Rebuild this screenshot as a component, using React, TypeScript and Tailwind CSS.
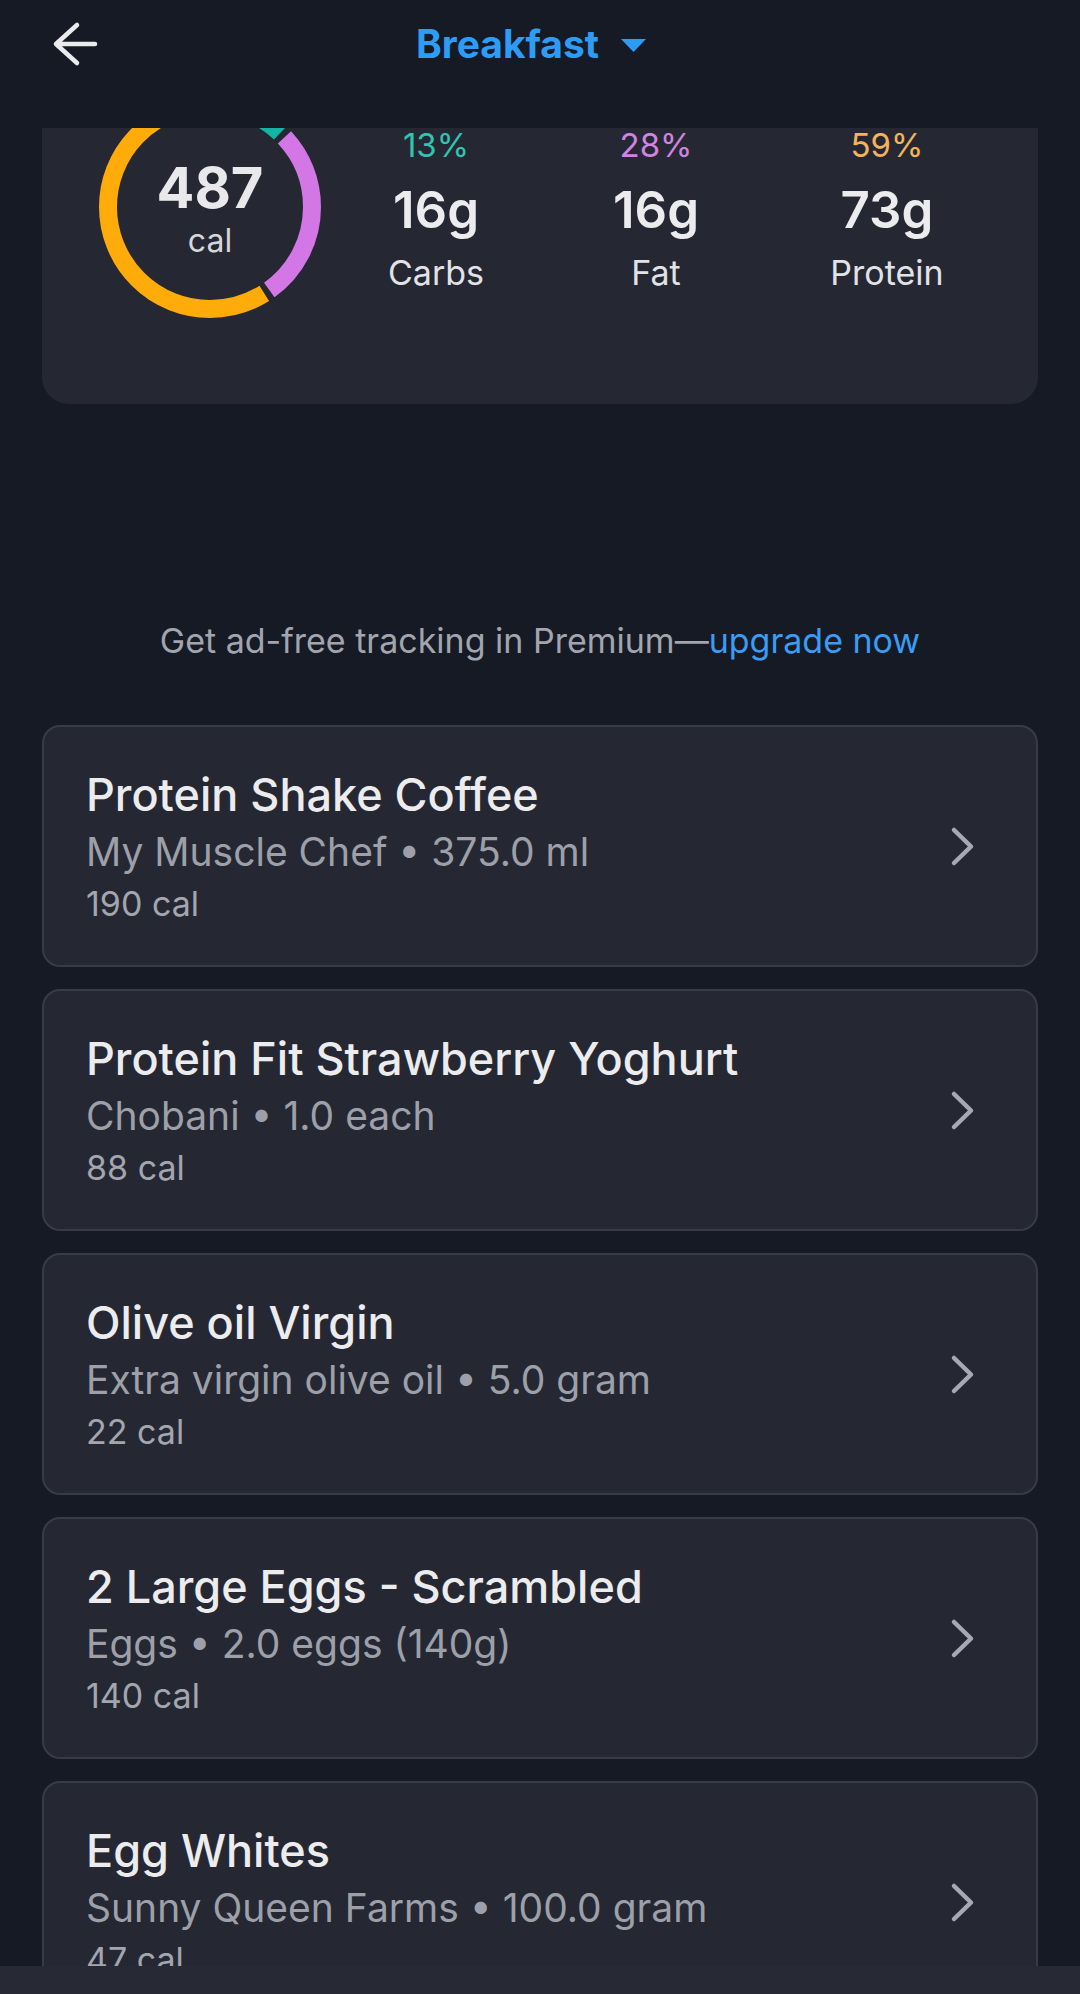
import React from "react";

const foods = [
  { name: "Protein Shake Coffee", detail: "My Muscle Chef • 375.0 ml", cal: "190 cal" },
  { name: "Protein Fit Strawberry Yoghurt", detail: "Chobani • 1.0 each", cal: "88 cal" },
  { name: "Olive oil Virgin", detail: "Extra virgin olive oil • 5.0 gram", cal: "22 cal" },
  { name: "2 Large Eggs - Scrambled", detail: "Eggs • 2.0 eggs (140g)", cal: "140 cal" },
  { name: "Egg Whites", detail: "Sunny Queen Farms • 100.0 gram", cal: "47 cal" },
];

const R = 102;
const C = 2 * Math.PI * R;
const GAP = 6;

const segments = [
  { color: "#14b3a4", start: 0, pct: 0.13 },
  { color: "#d477e6", start: 0.13, pct: 0.28 },
  { color: "#ffab0a", start: 0.41, pct: 0.59 },
];

function Ring() {
  return (
    <div className="relative h-[222px] w-[222px] shrink-0">
      <svg width="222" height="222" viewBox="0 0 222 222">
        <g transform="rotate(-90 111 111)">
          {segments.map((s) => (
            <circle
              key={s.color}
              cx="111"
              cy="111"
              r={R}
              fill="none"
              stroke={s.color}
              strokeWidth="18"
              strokeDasharray={`${s.pct * C - GAP} ${C}`}
              strokeDashoffset={-s.start * C}
            />
          ))}
        </g>
      </svg>
      <div className="absolute inset-0 flex flex-col items-center pt-[62px]">
        <span className="text-[56px] font-bold leading-[60px] text-[#e9e9ec]">487</span>
        <span className="mt-[4px] text-[32px] leading-[38px] text-[#d6d7db]">cal</span>
      </div>
    </div>
  );
}

function Macro({ pct, value, label, color, width }: { pct: string; value: string; label: string; color: string; width: string }) {
  return (
    <div className={`flex flex-col items-center ${width}`}>
      <span className={`text-[33px] leading-[34px] ${color}`}>{pct}</span>
      <span className="mt-[16px] text-[51px] font-semibold leading-[64px] text-[#ececef]">{value}</span>
      <span className="mt-[10px] text-[34px] leading-[42px] text-[#e2e3e6]">{label}</span>
    </div>
  );
}

function Chevron() {
  return (
    <svg width="25" height="41" viewBox="0 0 25 41" className="shrink-0">
      <polyline points="4,4 21,20.5 4,37" fill="none" stroke="#a6a9b1" strokeWidth="4.5" strokeLinecap="round" strokeLinejoin="round" />
    </svg>
  );
}

export default function App() {
  return (
    <div className="flex h-[1994px] w-[1080px] flex-col overflow-hidden bg-[#161a25] font-['Inter',sans-serif]">
      <header className="h-[128px] shrink-0">
        <div className="flex h-[88px] items-center pl-[50px]">
          <svg width="48" height="48" viewBox="0 0 48 48" className="shrink-0">
            <path d="M6 24 H45 M27 5 L6 24 L27 43" fill="none" stroke="#ebebed" strokeWidth="4.5" strokeLinecap="round" strokeLinejoin="round" />
          </svg>
          <div className="flex flex-1 items-center justify-center">
            <span className="text-[39px] font-bold leading-[48px] text-[#2d9cf5]">Breakfast</span>
            <svg width="25" height="13" viewBox="0 0 25 13" className="ml-[22px] mt-[2px]">
              <polygon points="0,0 25,0 12.5,13" fill="#2d9cf5" />
            </svg>
          </div>
          <div className="w-[116px] shrink-0" />
        </div>
      </header>

      <main className="flex flex-1 flex-col overflow-hidden">
        <div className="h-[276px] shrink-0 overflow-hidden px-[42px]">
          <div className="-mt-[40px] flex h-[316px] items-start rounded-[27px] bg-[#252833] pl-[57px] pt-[8px]">
            <Ring />
            <div className="ml-[3px] flex pt-[32px]">
              <Macro pct="13%" value="16g" label="Carbs" color="text-[#2fc4b4]" width="w-[224px]" />
              <Macro pct="28%" value="16g" label="Fat" color="text-[#d283e1]" width="w-[216px]" />
              <Macro pct="59%" value="73g" label="Protein" color="text-[#f5b35b]" width="w-[246px]" />
            </div>
          </div>
        </div>

        <p className="mt-[213px] text-center text-[34px] leading-[48px] text-[#a2a5ad]">
          Get ad-free tracking in Premium—<span className="text-[#3a9cf2]">upgrade now</span>
        </p>

        <div className="mt-[60px] flex flex-col gap-[22px] px-[42px]">
          {foods.map((f) => (
            <div
              key={f.name}
              className="flex h-[242px] shrink-0 items-center rounded-[18px] border-2 border-[#383b47] bg-[#252833] pl-[42px] pr-[61px]"
            >
              <div className="flex h-full flex-1 flex-col pt-[42px]">
                <span className="text-[45px] font-medium leading-[52px] text-[#ececef]">{f.name}</span>
                <span className="mt-[7px] text-[39px] leading-[48px] text-[#9da0a9]">{f.detail}</span>
                <span className="mt-[8px] text-[34px] leading-[40px] text-[#a3a6ae]">{f.cal}</span>
              </div>
              <Chevron />
            </div>
          ))}
        </div>
      </main>

      <div className="h-[28px] shrink-0 bg-[#272a35]" />
    </div>
  );
}
